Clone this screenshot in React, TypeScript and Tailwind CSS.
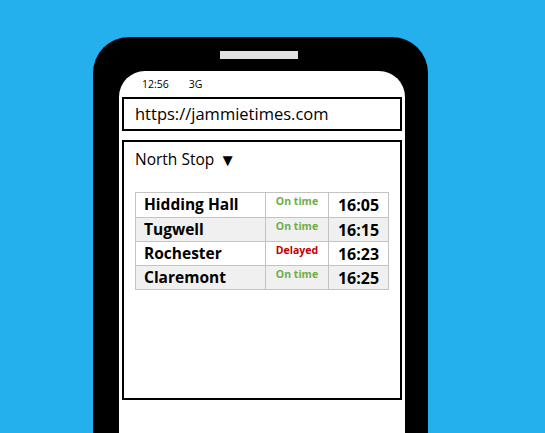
import React from "react";

const rows = [
  { name: "Hidding Hall", status: "On time", time: "16:05", alt: false },
  { name: "Tugwell", status: "On time", time: "16:15", alt: true },
  { name: "Rochester", status: "Delayed", time: "16:23", alt: false },
  { name: "Claremont", status: "On time", time: "16:25", alt: true },
];

export default function App() {
  return (
    <div
      className="w-[545px] h-[433px] overflow-hidden bg-[#23b0ec] pt-[37px] pl-[93px]"
      style={{ fontFamily: '"Open Sans", "Noto Sans", sans-serif' }}
    >
      <div className="w-[335px] h-[396px] bg-black rounded-t-[36px] flex flex-col pl-[26px] pr-[23px]">
        <div className="h-[34px] flex items-start justify-center">
          <div className="mt-[14px] ml-[-6px] w-[78px] h-[8px] bg-[#e1e1e1]" />
        </div>
        <div className="flex-1 bg-white rounded-t-[26px] flex flex-col px-[3px]">
          <div className="h-[26px] flex items-center pl-[20px] gap-[20px] text-[10.5px] text-black pt-[1px]">
            <span>12:56</span>
            <span>3G</span>
          </div>
          <div className="h-[34px] border-2 border-black flex items-center pl-[11px] text-[16.5px] text-black">
            https://jammietimes.com
          </div>
          <div className="mt-[9px] h-[260px] border-2 border-black flex flex-col pl-[11px]">
            <div className="h-[32px] flex items-center text-[15.5px] text-black pt-[3px]">
              North Stop <span className="ml-[5px] text-[17px] leading-none">▼</span>
            </div>
            <div className="mt-[18px] w-[254px] border border-[#c3c3c3]">
              {rows.map((r, i) => (
                <div
                  key={r.name}
                  className={`flex h-[24px] ${i > 0 ? "border-t border-[#c3c3c3]" : ""} ${r.alt ? "bg-[#f0f0f0]" : "bg-white"}`}
                >
                  <div className="w-[129px] pl-[8px] flex items-center font-bold text-[15.5px] text-black leading-none">
                    {r.name}
                  </div>
                  <div
                    className={`w-[63px] border-l border-[#c3c3c3] flex justify-center pt-[3px] font-bold text-[10.5px] leading-none ${r.status === "Delayed" ? "text-[#c00000]" : "text-[#70ad47]"}`}
                  >
                    {r.status}
                  </div>
                  <div className="flex-1 border-l border-[#c3c3c3] flex items-center justify-center font-bold text-[16px] text-black leading-none">
                    {r.time}
                  </div>
                </div>
              ))}
            </div>
          </div>
        </div>
      </div>
    </div>
  );
}
